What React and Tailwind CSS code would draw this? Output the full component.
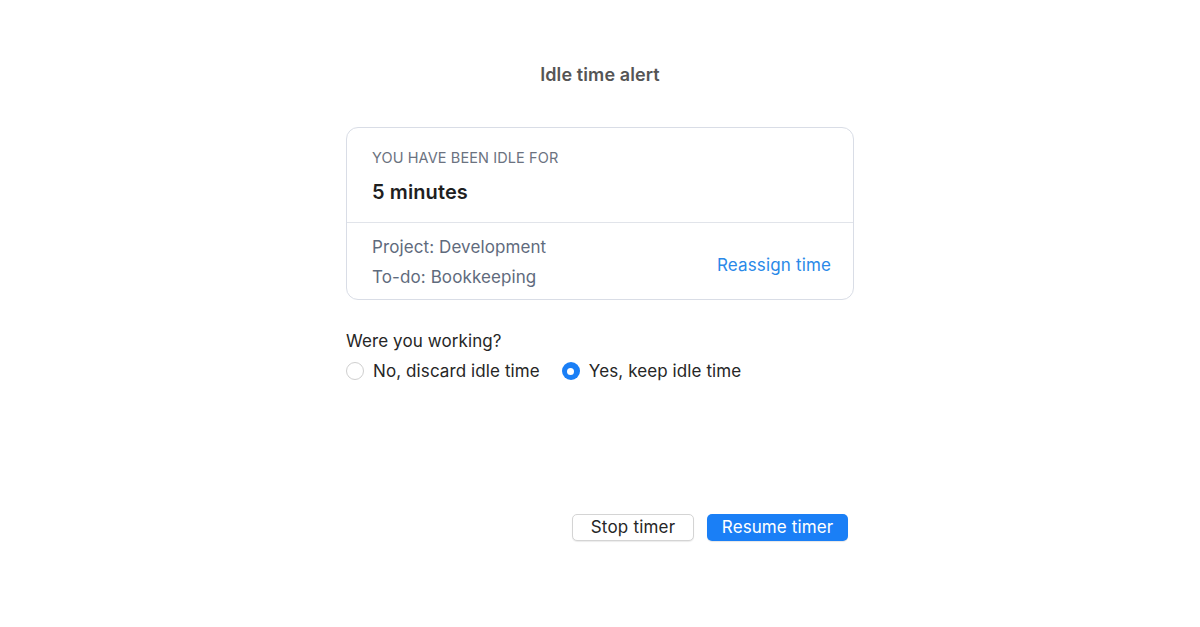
import { useState } from 'react';

const font = { fontFamily: 'Inter, "Noto Sans", "Liberation Sans", sans-serif' };

function Radio({ checked, label, onClick }) {
  return (
    <button onClick={onClick} className="flex items-center gap-[9px] text-[17px] leading-6 tracking-[0.1px] text-[#262626]">
      {checked ? (
        <span className="w-[18px] h-[18px] rounded-full bg-[#1a7ff6] flex items-center justify-center">
          <span className="w-[7px] h-[7px] rounded-full bg-white" />
        </span>
      ) : (
        <span className="w-[18px] h-[18px] rounded-full border border-[#cfcfcf] bg-white" />
      )}
      <span>{label}</span>
    </button>
  );
}

export default function App() {
  const [keep, setKeep] = useState(true);

  return (
    <div className="w-full h-[627px] bg-white" style={font}>
      <div className="w-[508px] mx-auto pt-[63px] flex flex-col">
        {/* Title */}
        <h1 className="text-center text-[18px] leading-6 font-semibold tracking-[0.1px] text-[#555555]">Idle time alert</h1>

        {/* Card */}
        <div className="mt-[40px] rounded-[12px] border border-[#d9dde6] flex flex-col">
          <div className="px-[25px] pt-[20px] pb-[17px] border-b border-[#e1e4ea]">
            <p className="text-[14.5px] leading-5 text-[#6b7280] uppercase tracking-[0.1px]">You have been idle for</p>
            <p className="mt-[11px] text-[20px] leading-[26px] font-semibold tracking-[0.1px] text-[#1f1f1f]">5 minutes</p>
          </div>
          <div className="pl-[25px] pr-[22px] pt-[12px] pb-[10px] flex items-end justify-between">
            <div className="flex flex-col gap-[6px] text-[17px] leading-6 tracking-[0.1px] text-[#5f6b7d]">
              <span>Project: Development</span>
              <span>To-do: Bookkeeping</span>
            </div>
            <button className="mb-[12px] text-[17px] leading-6 tracking-[0.15px] text-[#2a89e8]">Reassign time</button>
          </div>
        </div>

        {/* Question */}
        <p className="mt-[29px] text-[17px] leading-6 tracking-[0.1px] text-[#262626]">Were you working?</p>
        <div className="mt-[6px] flex items-center gap-[22px]">
          <Radio checked={!keep} label="No, discard idle time" onClick={() => setKeep(false)} />
          <Radio checked={keep} label="Yes, keep idle time" onClick={() => setKeep(true)} />
        </div>

        {/* Actions */}
        <div className="mt-[131px] pr-[6px] flex justify-end gap-[13px]">
          <button className="w-[122px] h-[27px] rounded-[5px] border border-[#d4d4d4] bg-white text-[17px] tracking-[0.2px] text-[#262626] shadow-[0_1px_1px_rgba(0,0,0,0.08)]">
            Stop timer
          </button>
          <button className="w-[141px] h-[27px] rounded-[5px] bg-[#1a7ff6] text-[17px] tracking-[0.1px] text-white shadow-[0_1px_1px_rgba(0,0,0,0.1)]">
            Resume timer
          </button>
        </div>
      </div>
    </div>
  );
}
